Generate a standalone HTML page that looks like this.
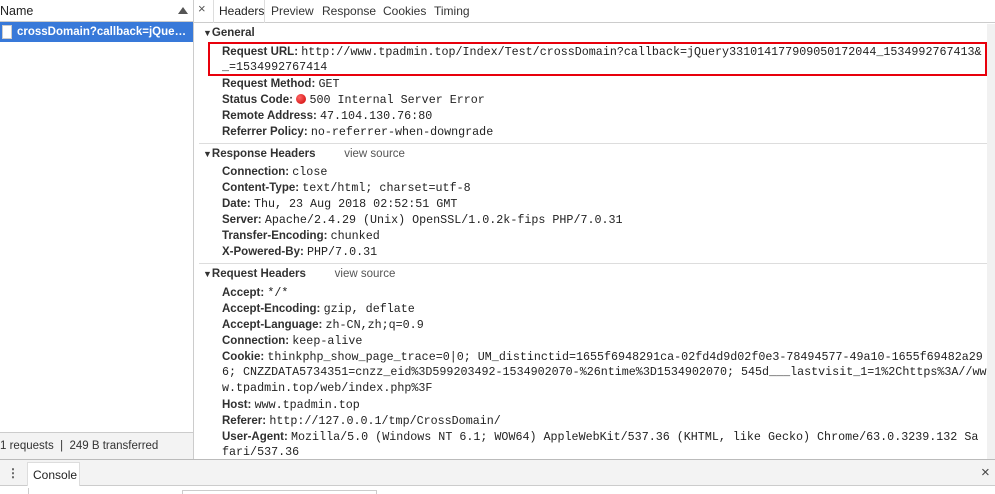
<!DOCTYPE html>
<html><head><meta charset="utf-8"><style>
*{margin:0;padding:0;box-sizing:border-box}
body{width:995px;height:494px;overflow:hidden;background:#fff;font-family:"Liberation Sans",sans-serif;font-size:12px;color:#222;position:relative}
.a{position:absolute;white-space:pre;line-height:16px}
.m{font-family:"Liberation Mono",monospace;font-size:11.7px;color:#222}
.l{font-weight:bold;color:#303030;font-size:11.5px}
.s{font-weight:bold;color:#333;font-size:11.5px}
.vs{color:#555;font-size:11.5px}
</style></head><body>
<!-- left panel -->
<div style="position:absolute;left:0;top:0;width:193px;height:22px;border-bottom:1px solid #ccc;background:#fff"></div>
<div class="a" style="left:0;top:3px;font-size:12.5px;color:#222">Name</div>
<div style="position:absolute;left:178px;top:7px;width:0;height:0;border-left:5px solid transparent;border-right:5px solid transparent;border-bottom:7px solid #555"></div>
<div style="position:absolute;left:0;top:22px;width:193px;height:20px;background:#3879d9"></div>
<div style="position:absolute;left:2px;top:25px;width:10px;height:14px;background:#fff;border:1px solid #ccc"></div>
<div class="a" style="left:17px;top:24px;width:172px;overflow:hidden;text-overflow:ellipsis;color:#fff;font-size:11.5px;font-weight:bold">crossDomain?callback=jQuery331014177909050172044</div>
<div style="position:absolute;left:0;top:432px;width:193px;height:28px;background:#f3f3f3;border-top:1px solid #ccc"></div>
<div class="a" style="left:0;top:438px;font-size:11.5px;color:#333">1 requests  |  249 B transferred</div>
<div style="position:absolute;left:193px;top:0;width:1px;height:460px;background:#ccc"></div>
<!-- tabs -->
<div style="position:absolute;left:194px;top:0;width:801px;height:23px;border-bottom:1px solid #ccc;background:#fff"></div>
<div class="a" style="left:198px;top:1px;color:#555;font-size:13px">×</div>
<div style="position:absolute;left:213px;top:0;width:1px;height:23px;background:#ddd"></div>
<div style="position:absolute;left:264px;top:0;width:1px;height:23px;background:#ddd"></div>
<div class="a" style="left:219px;top:3px;font-size:12px;color:#222">Headers</div>
<div class="a" style="left:271px;top:3px;font-size:12px;color:#333">Preview</div>
<div class="a" style="left:322px;top:3px;font-size:12px;color:#333">Response</div>
<div class="a" style="left:383px;top:3px;font-size:12px;color:#333">Cookies</div>
<div class="a" style="left:434px;top:3px;font-size:12px;color:#333">Timing</div>
<!-- scrollbar -->
<div style="position:absolute;left:987px;top:24px;width:8px;height:436px;background:#f1f1f1"></div>
<!-- General -->
<div class="a s" style="left:203px;top:25px"><span style="font-size:9px">▼</span>General</div>
<div style="position:absolute;left:208px;top:42px;width:779px;height:34px;border:2px solid #e8000c"></div>
<div class="a" style="left:222px;top:43px"><span class="l">Request URL: </span><span class="m">http://www.tpadmin.top/Index/Test/crossDomain?callback=jQuery331014177909050172044_1534992767413&amp;</span></div>
<div class="a m" style="left:222px;top:59px">_=1534992767414</div>
<div class="a" style="left:222px;top:75px"><span class="l">Request Method: </span><span class="m">GET</span></div>
<div class="a" style="left:222px;top:91px"><span class="l">Status Code: </span><span style="display:inline-block;width:10px;height:10px;border-radius:5px;background:radial-gradient(circle at 35% 35%,#f66,#c00);vertical-align:-1px"></span> <span class="m">500 Internal Server Error</span></div>
<div class="a" style="left:222px;top:107px"><span class="l">Remote Address: </span><span class="m">47.104.130.76:80</span></div>
<div class="a" style="left:222px;top:123px"><span class="l">Referrer Policy: </span><span class="m">no-referrer-when-downgrade</span></div>
<div style="position:absolute;left:199px;top:143px;width:788px;height:1px;background:#ddd"></div>
<!-- Response -->
<div class="a s" style="left:203px;top:146px"><span style="font-size:9px">▼</span>Response Headers<span class="vs" style="font-weight:normal">         view source</span></div>
<div class="a" style="left:222px;top:163px"><span class="l">Connection: </span><span class="m">close</span></div>
<div class="a" style="left:222px;top:179px"><span class="l">Content-Type: </span><span class="m">text/html; charset=utf-8</span></div>
<div class="a" style="left:222px;top:195px"><span class="l">Date: </span><span class="m">Thu, 23 Aug 2018 02:52:51 GMT</span></div>
<div class="a" style="left:222px;top:211px"><span class="l">Server: </span><span class="m">Apache/2.4.29 (Unix) OpenSSL/1.0.2k-fips PHP/7.0.31</span></div>
<div class="a" style="left:222px;top:227px"><span class="l">Transfer-Encoding: </span><span class="m">chunked</span></div>
<div class="a" style="left:222px;top:243px"><span class="l">X-Powered-By: </span><span class="m">PHP/7.0.31</span></div>
<div style="position:absolute;left:199px;top:263px;width:788px;height:1px;background:#ddd"></div>
<!-- Request -->
<div class="a s" style="left:203px;top:266px"><span style="font-size:9px">▼</span>Request Headers<span class="vs" style="font-weight:normal">         view source</span></div>
<div class="a" style="left:222px;top:284px"><span class="l">Accept: </span><span class="m">*/*</span></div>
<div class="a" style="left:222px;top:300px"><span class="l">Accept-Encoding: </span><span class="m">gzip, deflate</span></div>
<div class="a" style="left:222px;top:316px"><span class="l">Accept-Language: </span><span class="m">zh-CN,zh;q=0.9</span></div>
<div class="a" style="left:222px;top:332px"><span class="l">Connection: </span><span class="m">keep-alive</span></div>
<div class="a" style="left:222px;top:348px"><span class="l">Cookie: </span><span class="m">thinkphp_show_page_trace=0|0; UM_distinctid=1655f6948291ca-02fd4d9d02f0e3-78494577-49a10-1655f69482a29</span></div>
<div class="a m" style="left:222px;top:364px">6; CNZZDATA5734351=cnzz_eid%3D599203492-1534902070-%26ntime%3D1534902070; 545d___lastvisit_1=1%2Chttps%3A//ww</div>
<div class="a m" style="left:222px;top:380px">w.tpadmin.top/web/index.php%3F</div>
<div class="a" style="left:222px;top:396px"><span class="l">Host: </span><span class="m">www.tpadmin.top</span></div>
<div class="a" style="left:222px;top:412px"><span class="l">Referer: </span><span class="m">http://127.0.0.1/tmp/CrossDomain/</span></div>
<div class="a" style="left:222px;top:428px"><span class="l">User-Agent: </span><span class="m">Mozilla/5.0 (Windows NT 6.1; WOW64) AppleWebKit/537.36 (KHTML, like Gecko) Chrome/63.0.3239.132 Sa</span></div>
<div class="a m" style="left:222px;top:444px">fari/537.36</div>
<!-- drawer -->
<div style="position:absolute;left:0;top:459px;width:995px;height:27px;background:#f3f3f3;border-top:1px solid #bbb;border-bottom:1px solid #ccc"></div>
<div class="a" style="left:7px;top:465px;color:#555;font-weight:bold">⋮</div>
<div style="position:absolute;left:27px;top:462px;width:53px;height:24px;background:#fff;border:1px solid #ddd;border-bottom:none"></div>
<div class="a" style="left:33px;top:467px;font-size:12px;color:#222">Console</div>
<div class="a" style="left:981px;top:465px;font-size:15px;color:#444">×</div>
<div style="position:absolute;left:28px;top:488px;width:1px;height:6px;background:#ccc"></div>
<div style="position:absolute;left:182px;top:490px;width:195px;height:4px;border:1px solid #ccc;border-bottom:none"></div>
</body></html>
